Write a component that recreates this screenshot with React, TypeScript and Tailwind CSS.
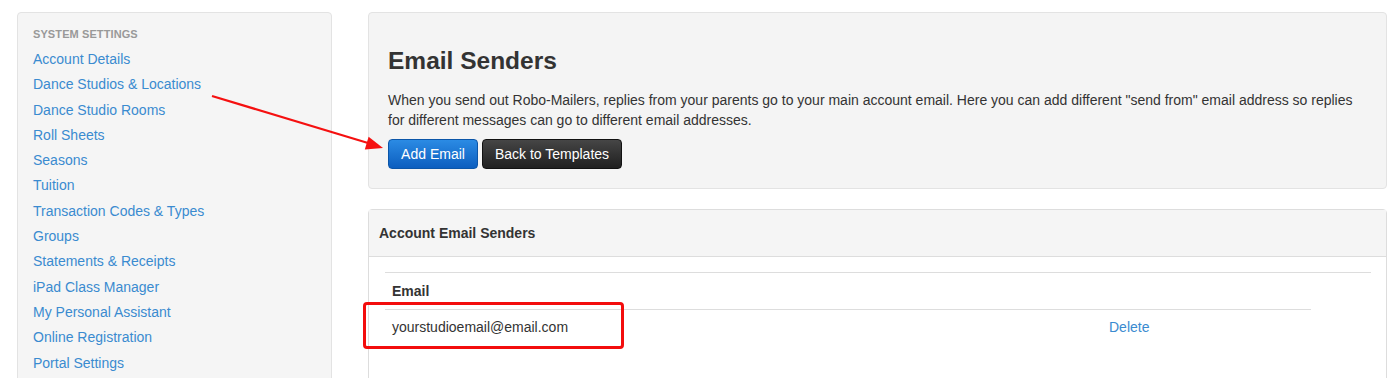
import React from 'react';

const settingsLinks = [
    'Account Details',
    'Dance Studios & Locations',
    'Dance Studio Rooms',
    'Roll Sheets',
    'Seasons',
    'Tuition',
    'Transaction Codes & Types',
    'Groups',
    'Statements & Receipts',
    'iPad Class Manager',
    'My Personal Assistant',
    'Online Registration',
    'Portal Settings',
];

function App() {
    return (
        <div className="relative w-[1396px] h-[378px] overflow-hidden bg-white flex items-start gap-[36px] pt-[12px] pl-[17px] pr-[9px] font-['Liberation_Sans',Arial,sans-serif] text-[#333]">
            {/* Sidebar */}
            <div className="w-[315px] shrink-0 bg-[#f5f5f5] border border-[#e3e3e3] rounded-[4px] pl-[15px] pt-[11px] pb-4">
                <p className="h-5 leading-5 text-[11px] font-bold text-[#999] tracking-[0.1px]">SYSTEM SETTINGS</p>
                <ul className="mt-[3px]">
                    {settingsLinks.map((link) => (
                        <li key={link} className="text-[14px] leading-[25.3px] text-[#3a8bd0]">
                            <a href="#">{link}</a>
                        </li>
                    ))}
                </ul>
            </div>

            {/* Main */}
            <div className="flex-1 flex flex-col">
                <div className="bg-[#f4f4f4] border border-[#e3e3e3] rounded-[4px] px-[19px] pt-[35px] pb-[19px]">
                    <h1 className="text-[24.5px] leading-[26px] font-bold text-[#333]">Email Senders</h1>
                    <p className="mt-[17px] text-[14px] leading-[19.5px] text-[#333]">
                        When you send out Robo-Mailers, replies from your parents go to your main account email. Here you can add different "send from" email address so replies
                        <br />
                        for different messages can go to different email addresses.
                    </p>
                    <div className="mt-[9px] flex gap-[4px]">
                        <button className="h-[30px] w-[90px] rounded-[4px] border border-[#0b55a8] bg-gradient-to-b from-[#2b8be4] to-[#0c5ebf] text-white text-[14px]">
                            Add Email
                        </button>
                        <button className="h-[30px] w-[140px] rounded-[4px] border border-[#111] bg-gradient-to-b from-[#464646] to-[#202020] text-white text-[14px]">
                            Back to Templates
                        </button>
                    </div>
                </div>

                <div className="mt-[20px] bg-white border border-[#ddd] rounded-[4px] h-[200px]">
                    <div className="h-[47px] bg-[#f5f5f5] border-b border-[#ddd] px-[10px] flex items-center text-[14px] font-bold text-[#333]">
                        Account Email Senders
                    </div>
                    <div className="pl-[16px] pr-[15px] pt-[15px]">
                        <div className="border-t border-[#ddd]">
                            <div className="h-[36px] flex items-center pl-[7px] text-[14px] font-bold text-[#333]">Email</div>
                            <div className="w-[926px] border-t border-[#ddd]"></div>
                            <div className="relative h-[35px] flex items-center text-[14px]">
                                <div className="w-[724px] pl-[7px] text-[#333]">yourstudioemail@email.com</div>
                                <a href="#" className="text-[#3a8bd0]">Delete</a>
                                <div className="absolute left-[-22px] top-[-8px] w-[261px] h-[47px] border-[3px] border-[#f30d0d] rounded-[4px]"></div>
                            </div>
                        </div>
                    </div>
                </div>
            </div>

            {/* Annotation arrow */}
            <svg className="absolute left-0 top-0 pointer-events-none" width="1396" height="378">
                <line x1="212" y1="96" x2="368" y2="143" stroke="#f51010" strokeWidth="2.2" />
                <polygon points="383,148 364.8,149.5 368.6,136.7" fill="#f51010" />
            </svg>
        </div>
    );
}

export default App;
